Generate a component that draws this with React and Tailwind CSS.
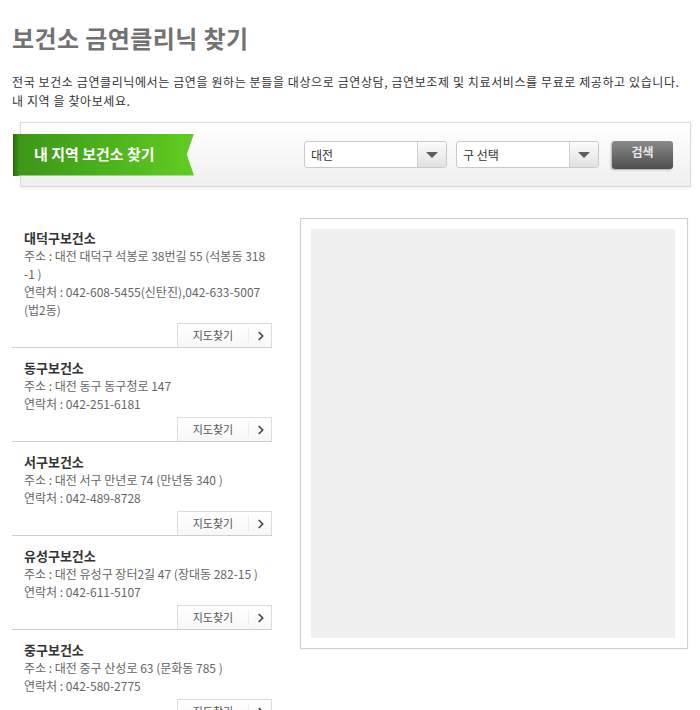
import { ChevronRight } from "lucide-react";

const clinics = [
  {
    name: "대덕구보건소",
    addr: ["주소 : 대전 대덕구 석봉로 38번길 55 (석봉동 318", "-1 )"],
    tel: ["연락처 : 042-608-5455(신탄진),042-633-5007", "(법2동)"],
  },
  { name: "동구보건소", addr: ["주소 : 대전 동구 동구청로 147"], tel: ["연락처 : 042-251-6181"] },
  { name: "서구보건소", addr: ["주소 : 대전 서구 만년로 74 (만년동 340 )"], tel: ["연락처 : 042-489-8728"] },
  { name: "유성구보건소", addr: ["주소 : 대전 유성구 장터2길 47 (장대동 282-15 )"], tel: ["연락처 : 042-611-5107"] },
  { name: "중구보건소", addr: ["주소 : 대전 중구 산성로 63 (문화동 785 )"], tel: ["연락처 : 042-580-2775"] },
];

function Select({ label }) {
  return (
    <div className="flex h-[27px] w-[143px] items-stretch overflow-hidden rounded-[3px] border border-[#c9c9c9] bg-white">
      <div className="flex flex-1 items-center pl-[6px] text-[12px] text-[#333]">{label}</div>
      <div className="flex w-[29px] items-center justify-center border-l border-[#d0d0d0] bg-gradient-to-b from-[#fbfbfb] to-[#e2e2e2]">
        <div className="h-0 w-0 border-x-[6px] border-t-[6px] border-x-transparent border-t-[#5a5a5a]" />
      </div>
    </div>
  );
}

function ClinicItem({ c }) {
  return (
    <div className="flex flex-col border-b border-[#cfcfcf]">
      <div className="px-3 pt-[11px] text-[12px] leading-[18px] text-[#666] whitespace-nowrap">
        <div className="text-[13px] font-bold text-[#333]">{c.name}</div>
        {c.addr.map((l) => (
          <div key={l}>{l}</div>
        ))}
        {c.tel.map((l) => (
          <div key={l}>{l}</div>
        ))}
      </div>
      <div className="mt-[4px] flex justify-end">
        <button className="flex h-[24px] w-[95px] items-center border border-b-0 border-[#dcdcdc] bg-gradient-to-b from-white to-[#f7f7f7] text-[11px] text-[#555]">
          <span className="w-[70px] text-center">지도찾기</span>
          <span className="h-[15px] border-l border-[#ececec]" />
          <ChevronRight size={14} strokeWidth={3} className="ml-[5px] text-[#444]" />
        </button>
      </div>
    </div>
  );
}

export default function App() {
  return (
    <div className="min-h-screen bg-white px-3 pt-[21px] font-['Noto_Sans_CJK_KR',sans-serif]">
      <h1 className="text-[24px] font-bold leading-[34px] tracking-[0.4px] text-[#727272]">보건소 금연클리닉 찾기</h1>
      <p className="mt-[17px] text-[12px] leading-[19px] tracking-[0.6px] text-[#333] whitespace-nowrap">
        전국 보건소 금연클리닉에서는 금연을 원하는 분들을 대상으로 금연상담, 금연보조제 및 치료서비스를 무료로 제공하고 있습니다.
        <br />
        내 지역 을 찾아보세요.
      </p>

      <div className="ml-2 mt-[12px] flex h-[65px] w-[671px] items-center border border-[#dadada] bg-gradient-to-b from-white to-[#efefef] shadow-[0_1px_2px_rgba(0,0,0,0.08)]">
        <div className="relative ml-[-8px]">
          <div className="flex h-[42px] w-[181px] items-center bg-gradient-to-r from-[#3c9418] via-[#4bb11c] to-[#62cc22] pl-[21px] text-[15px] font-bold text-white [clip-path:polygon(0_0,100%_0,96%_50%,100%_100%,0_100%)]">
            내 지역 보건소 찾기
          </div>
          <div className="absolute left-0 top-0 h-[42px] w-[6px] bg-gradient-to-r from-[#2a6d10] to-[#3c9418]" />
        </div>
        <div className="ml-auto flex items-center gap-[9px]">
          <Select label="대전" />
          <Select label="구 선택" />
          <button className="ml-[4px] mr-[17px] flex h-[28px] w-[61px] justify-center rounded-[3px] bg-gradient-to-b from-[#8a8a8a] to-[#505050] pt-[3px] text-[12px] font-bold leading-[16px] text-[#e8e8e8] shadow-[-1px_1px_2px_rgba(0,0,0,0.3)]">
            검색
          </button>
        </div>
      </div>

      <div className="mt-[31px] flex items-start gap-[28px]">
        <div className="w-[260px]">
          {clinics.map((c) => (
            <ClinicItem key={c.name} c={c} />
          ))}
        </div>
        <div className="h-[431px] w-[391px] border border-[#cfcfcf] pb-[10px] pl-[10px] pr-[12px] pt-[10px] shadow-[0_1px_2px_rgba(0,0,0,0.06)]">
          <div className="h-full w-full bg-[#f0f0f0]" />
        </div>
      </div>
    </div>
  );
}
